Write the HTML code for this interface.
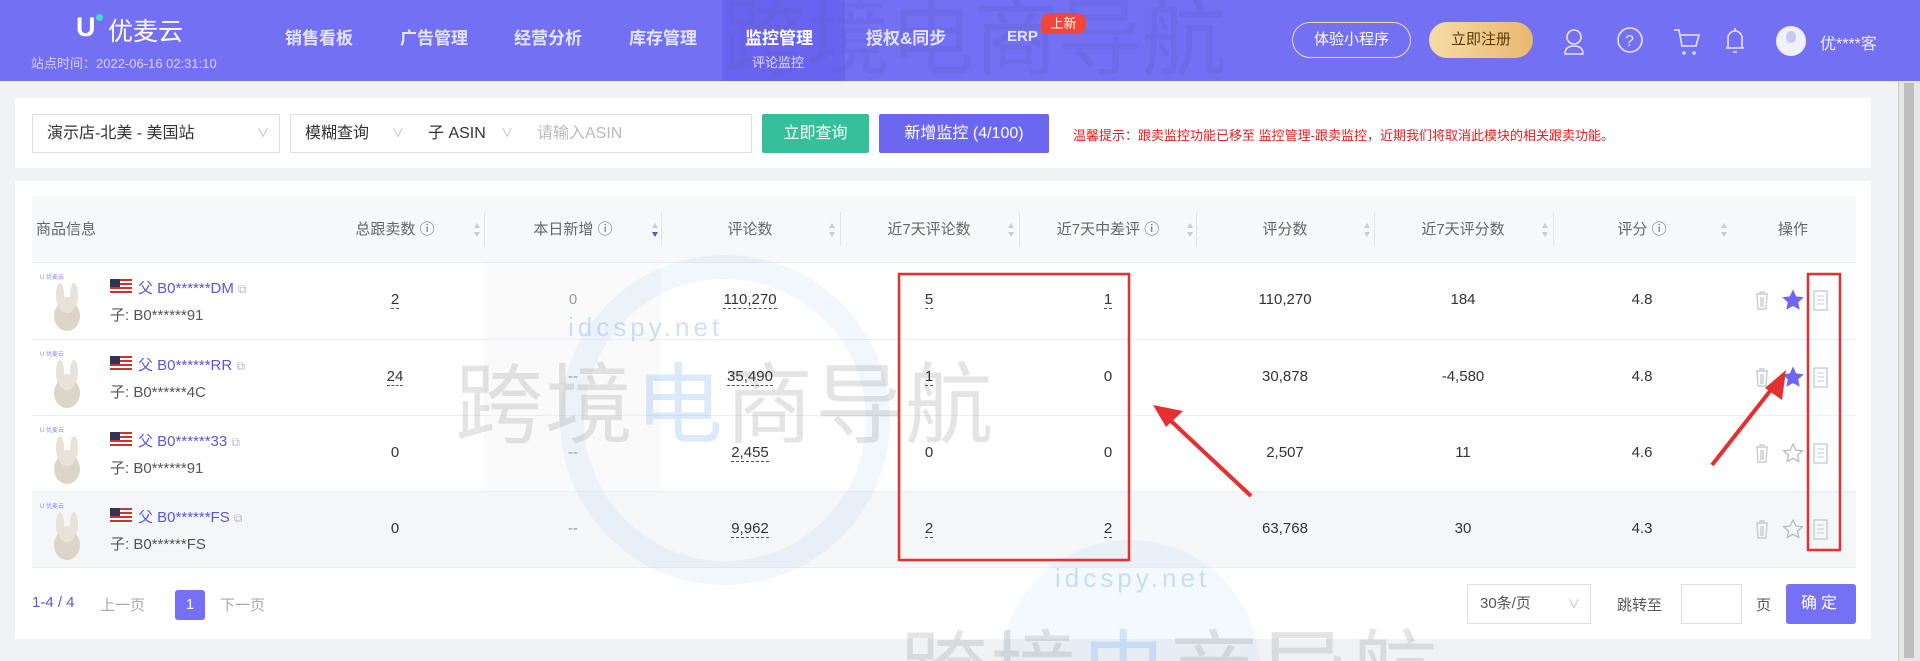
<!DOCTYPE html>
<html style="overflow:hidden;width:1920px;height:661px"><head><meta charset="utf-8"><style>
*{margin:0;padding:0;box-sizing:border-box}
body{width:1920px;height:661px;overflow:hidden;background:#f0f2f5;font-family:"Liberation Sans","Noto Sans CJK SC",sans-serif;color:#333;position:relative}
.hd{position:absolute;left:0;top:0;width:1920px;height:81px;background:#7470f4;color:#fff}
.abs{position:absolute}
.nav{position:absolute;top:24px;font-size:17px;font-weight:bold;color:#e6e5ff}
.card{position:absolute;left:15px;width:1856px;background:#fff}
.sel{position:absolute;top:114px;height:39px;border:1px solid #dcdfe6;background:#fff;font-size:16px;line-height:37px;padding-left:14px;color:#333}
.arr{position:absolute;right:10px;top:0;color:#bbb;font-size:12px}
.th{position:absolute;top:196px;height:67px;line-height:67px;font-size:15px;color:#666;text-align:center}
.row{position:absolute;left:32px;width:1824px;border-bottom:1px solid #ebeef5}
.c{position:absolute;text-align:center;font-size:15px;color:#333}
.u{border-bottom:1px dashed #555}
.pn{font-size:15px;color:#5b57d6}
.sub{font-size:15px;color:#555}
#wrap{position:absolute;left:0;top:0;width:1920px;height:661px;overflow:hidden}
</style></head><body><div id="wrap">
<div class="hd">
 <div class="abs" style="left:76px;top:12px;font-size:27px;font-weight:bold;color:#fff">U</div>
 <div class="abs" style="left:96px;top:14px;width:7px;height:7px;border-radius:50%;background:#3fe0c0"></div>
 <div class="abs" style="left:108px;top:12px;font-size:25px;color:#fff">优麦云</div>
 <div class="abs" style="left:31px;top:53px;font-size:13px;color:#d6d4ff">站点时间：2022-06-16 02:31:10</div>
 <div class="nav" style="left:285px">销售看板</div>
 <div class="nav" style="left:400px">广告管理</div>
 <div class="nav" style="left:514px">经营分析</div>
 <div class="nav" style="left:629px">库存管理</div>
 <div class="abs" style="left:722px;top:0;width:123px;height:81px;background:#6a63ef"></div>
 <div class="abs" style="left:722px;top:-28px;font-size:84px;color:rgba(100,95,210,.35);white-space:nowrap">跨境电商导航</div>
 <div class="nav" style="left:745px;color:#fff">监控管理</div>
 <div class="abs" style="left:752px;top:52px;font-size:13px;color:#dcdaff">评论监控</div>
 <div class="nav" style="left:866px">授权&amp;同步</div>
 <div class="nav" style="left:1007px;font-size:15px;top:28px">ERP</div>
 <div class="abs" style="left:1041px;top:13px;width:45px;height:21px;background:#f0473a;border-radius:9px 9px 9px 0;font-size:13px;line-height:21px;text-align:center;color:#fff">上新</div>
 <div class="abs" style="left:1292px;top:22px;width:119px;height:36px;border:1px solid #f3d7a6;border-radius:18px;font-size:15px;line-height:34px;text-align:center">体验小程序</div>
 <div class="abs" style="left:1429px;top:22px;width:104px;height:36px;border-radius:18px;background:linear-gradient(90deg,#f6dba6,#e8b86f);font-size:15px;line-height:36px;text-align:center;color:#5a3a10">立即注册</div>
 <svg class="abs" style="left:1560px;top:24px" width="200" height="34" fill="none" stroke="#e6e5ff" stroke-width="1.6">
  <circle cx="14" cy="13" r="7"/><path d="M5 30c0-6 4-8 9-8s9 2 9 8z"/>
  <circle cx="70" cy="16" r="12"/><text x="65" y="22" fill="#e6e5ff" stroke="none" font-size="16" font-family="Liberation Sans">?</text>
  <path d="M114 6h5l3 16h14l3-11h-18M124 28a1 1 0 1 0 .1 0M134 28a1 1 0 1 0 .1 0"/>
  <path d="M168 24V14a7 7 0 0 1 14 0v10h2H166zM173 28h4M175 4v3"/>
 </svg>
 <div class="abs" style="left:1776px;top:26px;width:30px;height:30px;border-radius:50%;background:#f0f0ff"></div>
 <div class="abs" style="left:1786px;top:31px;width:10px;height:12px;border-radius:50%;background:#c9c8ee"></div>
 <div class="abs" style="left:1820px;top:30px;font-size:16px;color:#eee">优****客</div>
</div>
<div class="abs" style="left:1898px;top:81px;width:22px;height:580px;background:#e6e6e6;border-left:1px solid #ccc"><div style="margin:2px 5px;width:10px;height:575px;background:#bdbdbd"></div></div>

<div class="card" style="top:98px;height:70px"></div>
<div class="sel" style="left:32px;width:248px">演示店-北美 - 美国站<span class="arr">∨</span></div>
<div class="sel" style="left:290px;width:125px">模糊查询<span class="arr">∨</span></div>
<div class="sel" style="left:414px;width:110px;border-left:none">子 ASIN<span class="arr">∨</span></div>
<div class="sel" style="left:523px;width:229px;border-left:none;color:#bbb">请输入ASIN</div>
<div class="abs" style="left:762px;top:114px;width:107px;height:39px;background:#35bf9b;color:#fff;font-size:16px;line-height:39px;text-align:center;border-radius:2px">立即查询</div>
<div class="abs" style="left:879px;top:114px;width:170px;height:39px;background:#6d66f0;color:#fff;font-size:16px;line-height:39px;text-align:center;border-radius:2px">新增监控 (4/100)</div>
<div class="abs" style="left:1073px;top:125px;font-size:13px;color:#e02020">温馨提示：跟卖监控功能已移至 监控管理-跟卖监控，近期我们将取消此模块的相关跟卖功能。</div>

<div class="card" style="top:181px;height:458px"></div>
<div class="abs" style="left:32px;top:196px;width:1824px;height:67px;background:#f7f8fa;border-bottom:1px solid #ebeef5"></div>
<div class="th" style="left:36px;text-align:left">商品信息</div>
<div class="abs" style="left:484px;top:263px;width:177px;height:305px;background:#fafafa"></div>
<div class="row" style="top:492px;height:76px;background:#f5f6f8;left:32px"></div>
<div class="row" style="top:263px;height:77px"></div>
<div class="row" style="top:340px;height:76px"></div>
<div class="row" style="top:416px;height:76px"></div>
<div class="row" style="top:492px;height:76px"></div>

<!-- watermarks -->
<div class="abs" style="left:560px;top:255px;width:330px;height:330px;border-radius:50%;border:24px solid rgba(120,180,240,.1)"></div>
<div class="abs" style="left:1000px;top:540px;width:260px;height:260px;border-radius:50%;background:rgba(120,180,240,.08)"></div>
<div class="abs" style="left:455px;top:335px;font-size:88px;color:rgba(150,150,150,.26);letter-spacing:2px;white-space:nowrap">跨境<span style="color:rgba(90,160,235,.22)">电</span>商导航</div>
<div class="abs" style="left:568px;top:312px;font-size:26px;color:rgba(90,160,235,.3);letter-spacing:4px">idcspy.net</div>
<div class="abs" style="left:900px;top:602px;font-size:88px;color:rgba(150,150,150,.26);white-space:nowrap;letter-spacing:2px">跨境<span style="color:rgba(90,160,235,.22)">电</span>商导航</div>
<div class="abs" style="left:1055px;top:563px;font-size:26px;color:rgba(90,160,235,.3);letter-spacing:4px">idcspy.net</div>

<div id="cols"></div>
<script>
var hs=[["总跟卖数 ⓘ",306],["本日新增 ⓘ",484],["评论数",661],["近7天评论数",840],["近7天中差评 ⓘ",1019],["评分数",1196],["近7天评分数",1374],["评分 ⓘ",1553]];
var h="";
hs.forEach(function(x,i){h+='<div class="th" style="left:'+x[1]+'px;width:178px">'+x[0]+'</div>';
h+='<svg class="abs" style="left:'+(x[1]+167)+'px;top:222px" width="8" height="16"><path d="M4 1L7 6H1z" fill="#ccc"/><path d="M4 15L7 10H1z" fill="'+(i==1?'#5b57d6':'#ccc')+'"/></svg>';
if(i>0)h+='<div class="abs" style="left:'+x[1]+'px;top:212px;width:1px;height:34px;background:#e5e5e5"></div>';});
h+='<div class="th" style="left:1730px;width:126px">操作</div>';
var rows=[["DM","91","2","0","110,270","5","1","110,270","184","4.8",1],["RR","4C","24","--","35,490","1","0","30,878","-4,580","4.8",1],["33","91","0","--","2,455","0","0","2,507","11","4.6",0],["FS","FS","0","--","9,962","2","2","63,768","30","4.3",0]];
var tops=[263,340,416,492];
rows.forEach(function(r,i){var t=tops[i],m=t+28;
h+='<svg class="abs" style="left:38px;top:'+(t+8)+'px" width="60" height="62"><text x="2" y="8" font-size="6" fill="#88f">U 优麦云</text><ellipse cx="22" cy="24" rx="4" ry="12" fill="#e8e2d8"/><ellipse cx="36" cy="24" rx="4" ry="12" fill="#e8e2d8"/><ellipse cx="29" cy="45" rx="13" ry="15" fill="#ddd5c8"/><circle cx="29" cy="34" r="8" fill="#e8e2d8"/></svg>';
h+='<div class="abs" style="left:110px;top:'+(t+16)+'px;width:22px;height:15px;background:repeating-linear-gradient(#c33 0 2px,#fff 2px 4px)"><div style="width:10px;height:8px;background:#335"></div></div>';
h+='<div class="abs pn" style="left:138px;top:'+(t+14)+'px">父 B0******'+r[0]+' <span style="color:#bbb;font-size:12px">⧉</span></div>';
h+='<div class="abs sub" style="left:110px;top:'+(t+41)+'px">子: B0******'+r[1]+'</div>';
var vals=r.slice(2,10);
vals.forEach(function(v,j){var x=hs[j][1];var ul=(j==0&&v!="0")||j==2||((j==3||j==4)&&v!="0");
h+='<div class="c" style="left:'+x+'px;width:178px;top:'+(m)+'px;color:'+(j==1?'#999':'#333')+'"><span class="'+(ul?'u':'')+'">'+v+'</span></div>';});
var sc=r[10]?'#6d66f0':'none',ss=r[10]?'#6d66f0':'#bbb';
h+='<svg class="abs" style="left:1753px;top:'+(m-2)+'px" width="80" height="24"><path d="M3 5h12M7 5V3h4v2M4 5l1 15h8l1-15M8 8v10M10 8v10" stroke="#ccc" fill="none" stroke-width="1.4"/><path d="M40 2l2.8 6 6.5.7-4.8 4.4 1.3 6.4L40 16.3l-5.8 3.2 1.3-6.4-4.8-4.4 6.5-.7z" fill="'+sc+'" stroke="'+ss+'" stroke-width="1.3"/><rect x="61" y="2" width="13" height="19" fill="none" stroke="#ccc" stroke-width="1.4"/><path d="M64 7h7M64 11h7M64 15h7" stroke="#ccc"/></svg>';
});
document.getElementById("cols").innerHTML=h;
</script>

<svg class="abs" style="left:0;top:0" width="1920" height="661" fill="none">
 <rect x="899" y="274" width="230" height="286" stroke="#e53030" stroke-width="2.5"/>
 <rect x="1808" y="274" width="32" height="276" stroke="#e53030" stroke-width="2.5"/>
 <path d="M1251 496L1170 420" stroke="#e53030" stroke-width="4"/>
 <path d="M1153 405l30 6-17 16z" fill="#e53030"/>
 <path d="M1712 465L1774 386" stroke="#e53030" stroke-width="4"/>
 <path d="M1786 370l-4 30-17-12z" fill="#e53030"/>
</svg>

<div class="abs" style="left:32px;top:594px;font-size:15px;color:#5b57d6">1-4 / 4</div>
<div class="abs" style="left:100px;top:594px;font-size:15px;color:#aaa">上一页</div>
<div class="abs" style="left:175px;top:590px;width:30px;height:30px;background:#7570f4;color:#fff;border-radius:3px;text-align:center;line-height:30px;font-size:15px">1</div>
<div class="abs" style="left:220px;top:594px;font-size:15px;color:#aaa">下一页</div>
<div class="abs" style="left:1467px;top:584px;width:124px;height:40px;border:1px solid #dcdfe6;background:#fff;font-size:15px;line-height:38px;padding-left:12px;color:#555">30条/页<span style="position:absolute;right:10px;color:#bbb;font-size:12px">∨</span></div>
<div class="abs" style="left:1617px;top:594px;font-size:15px;color:#555">跳转至</div>
<div class="abs" style="left:1681px;top:584px;width:61px;height:40px;border:1px solid #dcdfe6;background:#fff"></div>
<div class="abs" style="left:1756px;top:594px;font-size:15px;color:#555">页</div>
<div class="abs" style="left:1786px;top:584px;width:70px;height:40px;background:#7570f4;color:#fff;border-radius:3px;text-align:center;line-height:40px;font-size:16px;letter-spacing:4px">确定</div>
</div></body></html>
